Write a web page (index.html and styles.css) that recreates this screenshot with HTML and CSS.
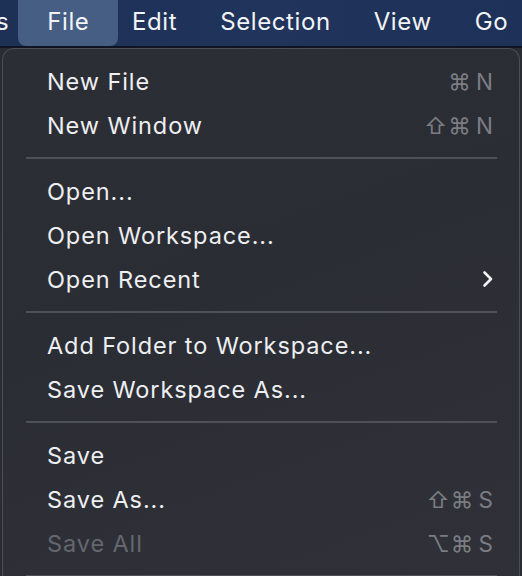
FILE: index.html
```html
<!DOCTYPE html>
<html>
<head>
<meta charset="utf-8">
<link rel="stylesheet" href="styles.css">
</head>
<body>
<div class="screen">
  <div class="menubar">
    <span class="mb-item cut">s</span>
    <span class="mb-item active">File</span>
    <span class="mb-item">Edit</span>
    <span class="mb-item">Selection</span>
    <span class="mb-item">View</span>
    <span class="mb-item">Go</span>
  </div>
  <div class="menu">
    <div class="row"><span class="label">New File</span><span class="sc">⌘ N</span></div>
    <div class="row"><span class="label">New Window</span><span class="sc">⇧⌘ N</span></div>
    <div class="sep"></div>
    <div class="row"><span class="label">Open...</span></div>
    <div class="row"><span class="label">Open Workspace...</span></div>
    <div class="row"><span class="label">Open Recent</span>
      <svg class="chev" width="12" height="18" viewBox="0 0 12 18"><path d="M2.5 2.5 L9 9 L2.5 15.5" fill="none" stroke="#f2f2f2" stroke-width="2.6" stroke-linecap="round" stroke-linejoin="round"/></svg>
    </div>
    <div class="sep"></div>
    <div class="row"><span class="label">Add Folder to Workspace...</span></div>
    <div class="row"><span class="label">Save Workspace As...</span></div>
    <div class="sep"></div>
    <div class="row"><span class="label">Save</span></div>
    <div class="row"><span class="label">Save As...</span><span class="sc">⇧⌘ S</span></div>
    <div class="row disabled"><span class="label">Save All</span><span class="sc">⌥⌘ S</span></div>
    <div class="sep"></div>
  </div>
</div>
</body>
</html>
```
FILE: styles.css
```css
html, body {
  margin: 0;
  padding: 0;
  background: #2a2c33;
  overflow: hidden;
}
.screen {
  width: 522px;
  height: 576px;
  overflow: hidden;
  font-family: Inter, "Noto Sans", "DejaVu Sans", sans-serif;
  background: #2a2c33;
}
.menubar {
  height: 46px;
  background: linear-gradient(90deg, #1d3056 0%, #20345c 50%, #1e3158 100%);
  display: flex;
  align-items: stretch;
  color: #f2f3f5;
  font-size: 24px;
  border-bottom: 2px solid #0f1420;
  white-space: nowrap;
}
.mb-item {
  display: flex;
  align-items: center;
  padding: 0 21.5px 3px 21.5px;
  letter-spacing: 0.6px;
}
.mb-item.cut {
  margin-left: -4px;
  padding-left: 0;
  padding-right: 17px;
}
.mb-item.active {
  background: #465d84;
  border-radius: 0 0 8px 8px;
  padding: 0 29px 3px 29px;
  margin: 0 -8px;
}
.menu {
  margin-left: 2px;
  width: 518px;
  height: 540px;
  background: linear-gradient(160deg, #2c2e36 0%, #2b2d35 45%, #303138 100%);
  border: 1px solid #4c4e55;
  border-bottom: none;
  border-radius: 12px 12px 0 0;
  padding-top: 10px;
  box-sizing: border-box;
}
.row {
  height: 44px;
  display: flex;
  align-items: center;
  padding: 0 25px 0 44px;
  color: #eeeff1;
  font-size: 23.5px;
  letter-spacing: 0.9px;
}
.label {
  flex: 1;
  white-space: nowrap;
}
.sc {
  color: #7b7d83;
  font-size: 22.5px;
  letter-spacing: 1px;
  word-spacing: -3px;
}
.row.disabled .label {
  color: #65676e;
}
.chev {
  margin-right: 0;
}
.sep {
  height: 22px;
  display: flex;
  align-items: center;
  padding: 0 22px 0 23px;
}
.sep::before {
  content: "";
  flex: 1;
  height: 2px;
  background: #4f5158;
}
```
